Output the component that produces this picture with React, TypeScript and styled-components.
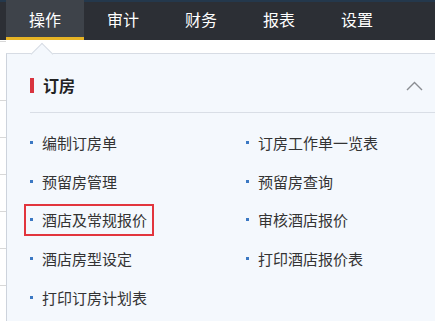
import styled, { createGlobalStyle } from 'styled-components';

const GlobalStyle = createGlobalStyle`
  html, body {
    margin: 0;
    padding: 0;
    background: #ffffff;
  }
  body {
    font-family: "Noto Sans CJK SC", "Noto Sans", sans-serif;
  }
  #root {
    height: 321px;
    overflow: hidden;
  }
`;

const Page = styled.div`
  display: flex;
  flex-direction: column;
  height: 321px;
`;

const NavBar = styled.nav`
  display: flex;
  height: 40px;
  padding-left: 6px;
  background: #2c2f35;
  box-shadow: inset 0 2px 0 #24384c;
`;

const Tab = styled.div<{ $active?: boolean }>`
  width: 78px;
  display: flex;
  align-items: center;
  justify-content: center;
  box-sizing: border-box;
  padding-top: ${(p) => (p.$active ? '1px' : '0')};
  font-size: 16px;
  color: #ffffff;
  background: ${(p) => (p.$active ? '#3e434a' : 'transparent')};
  border-bottom: 3px solid ${(p) => (p.$active ? '#e7b425' : 'transparent')};
`;

const Body = styled.div`
  flex: 1;
  display: flex;
`;

const Gutter = styled.div`
  width: 6px;
  background: repeating-linear-gradient(
    to bottom,
    transparent 0 36px,
    #d8d8d8 36px 37px
  );
  background-position: 0 24px;
`;

const Panel = styled.section`
  position: relative;
  flex: 1;
  margin-top: 13px;
  background: #f4f8fd;
  border-top: 1px solid #d7dce4;
  border-left: 1px solid #cdd3dc;
`;

const Pointer = styled.span`
  position: absolute;
  left: 27px;
  top: -8px;
  width: 15px;
  height: 15px;
  background: #f4f8fd;
  border-top: 1px solid #d7dce4;
  border-left: 1px solid #d7dce4;
  transform: rotate(45deg);
`;

const Header = styled.header`
  display: flex;
  align-items: center;
  height: 59px;
  margin-left: 23px;
  padding-right: 12px;
  padding-top: 4px;
  box-sizing: border-box;
  border-bottom: 1px solid #d9dee6;
`;

const Mark = styled.span`
  width: 4px;
  height: 15px;
  margin-right: 9px;
  background: #d9343f;
`;

const Title = styled.h3`
  flex: 1;
  margin: 0;
  font-size: 16px;
  font-weight: 700;
  color: #222;
`;

const Chevron = styled.svg`
  width: 17px;
  height: 10px;
  margin-top: 2px;
`;

const Grid = styled.ul`
  list-style: none;
  margin: 0;
  padding: 10px 0 0 17px;
  display: grid;
  grid-template-columns: 216px 1fr;
  grid-auto-rows: 38.7px;
`;

const Cell = styled.li`
  display: flex;
  align-items: center;
`;

const Item = styled.a<{ $marked?: boolean }>`
  display: inline-flex;
  align-items: center;
  height: 32px;
  box-sizing: border-box;
  padding: 0 5px 0 4px;
  border: 2px solid ${(p) => (p.$marked ? '#e2353d' : 'transparent')};
  font-size: 15px;
  color: #333;
  text-decoration: none;
  white-space: nowrap;
`;

const Bullet = styled.span`
  width: 3px;
  height: 3px;
  margin-right: 9px;
  background: #3b78c3;
`;

const tabs = ['操作', '审计', '财务', '报表', '设置'];

const items = [
  { label: '编制订房单' },
  { label: '订房工作单一览表' },
  { label: '预留房管理' },
  { label: '预留房查询' },
  { label: '酒店及常规报价', marked: true },
  { label: '审核酒店报价' },
  { label: '酒店房型设定' },
  { label: '打印酒店报价表' },
  { label: '打印订房计划表' },
];

export default function App() {
  return (
    <Page>
      <GlobalStyle />
      <NavBar>
        {tabs.map((t, i) => (
          <Tab key={t} $active={i === 0}>
            {t}
          </Tab>
        ))}
      </NavBar>
      <Body>
        <Gutter />
        <Panel>
          <Pointer />
          <Header>
            <Mark />
            <Title>订房</Title>
            <Chevron viewBox="0 0 17 10">
              <polyline points="1,9 8.5,1.5 16,9" fill="none" stroke="#8a8d92" strokeWidth="1.4" />
            </Chevron>
          </Header>
          <Grid>
            {items.map((it) => (
              <Cell key={it.label}>
                <Item href="#" $marked={it.marked}>
                  <Bullet />
                  {it.label}
                </Item>
              </Cell>
            ))}
          </Grid>
        </Panel>
      </Body>
    </Page>
  );
}
